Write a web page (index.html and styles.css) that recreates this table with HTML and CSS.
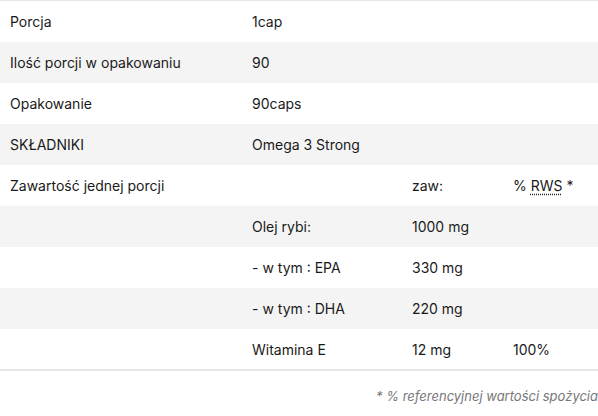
FILE: index.html
```html
<!DOCTYPE html>
<html lang="pl">
<head>
<meta charset="utf-8">
<link rel="stylesheet" href="styles.css">
</head>
<body>
<table class="facts">
  <colgroup>
    <col class="c1"><col class="c2"><col class="c3"><col class="c4">
  </colgroup>
  <tbody>
    <tr><td>Porcja</td><td colspan="3">1cap</td></tr>
    <tr><td>Ilość porcji w opakowaniu</td><td colspan="3">90</td></tr>
    <tr><td>Opakowanie</td><td colspan="3">90caps</td></tr>
    <tr><td>SKŁADNIKI</td><td colspan="3">Omega 3 Strong</td></tr>
    <tr><td>Zawartość jednej porcji</td><td></td><td>zaw:</td><td>% <abbr title="Referencyjna wartość spożycia">RWS</abbr> *</td></tr>
    <tr><td></td><td>Olej rybi:</td><td>1000 mg</td><td></td></tr>
    <tr><td></td><td>- w tym : EPA</td><td>330 mg</td><td></td></tr>
    <tr><td></td><td>- w tym : DHA</td><td>220 mg</td><td></td></tr>
    <tr><td></td><td>Witamina E</td><td>12 mg</td><td>100%</td></tr>
  </tbody>
</table>
<p class="note">* % referencyjnej wartości spożycia</p>
</body>
</html>
```
FILE: styles.css
```css
html, body {
  margin: 0;
  padding: 0;
  background: #fff;
}
body {
  font-family: Inter, "Liberation Sans", Arial, sans-serif;
  font-size: 14px;
  color: #1a1a1a;
}
.facts {
  width: 598px;
  border-collapse: collapse;
  table-layout: fixed;
  border-top: 1px solid #e6e6e6;
  border-bottom: 2px solid #e6e6e6;
}
.c1 { width: 242px; }
.c2 { width: 160px; }
.c3 { width: 101px; }
.c4 { width: 95px; }
.facts td {
  height: 41px;
  padding: 1px 0 0 10px;
  line-height: 17px;
  vertical-align: middle;
  box-sizing: border-box;
  white-space: nowrap;
}
.facts tr:nth-child(even) td {
  background: #f4f4f4;
}
abbr {
  text-decoration: underline dotted;
  text-underline-offset: 3px;
}
.note {
  margin: 0;
  padding-top: 17px;
  line-height: 17px;
  text-align: right;
  font-style: italic;
  font-size: 13px;
  color: #777;
}
```
